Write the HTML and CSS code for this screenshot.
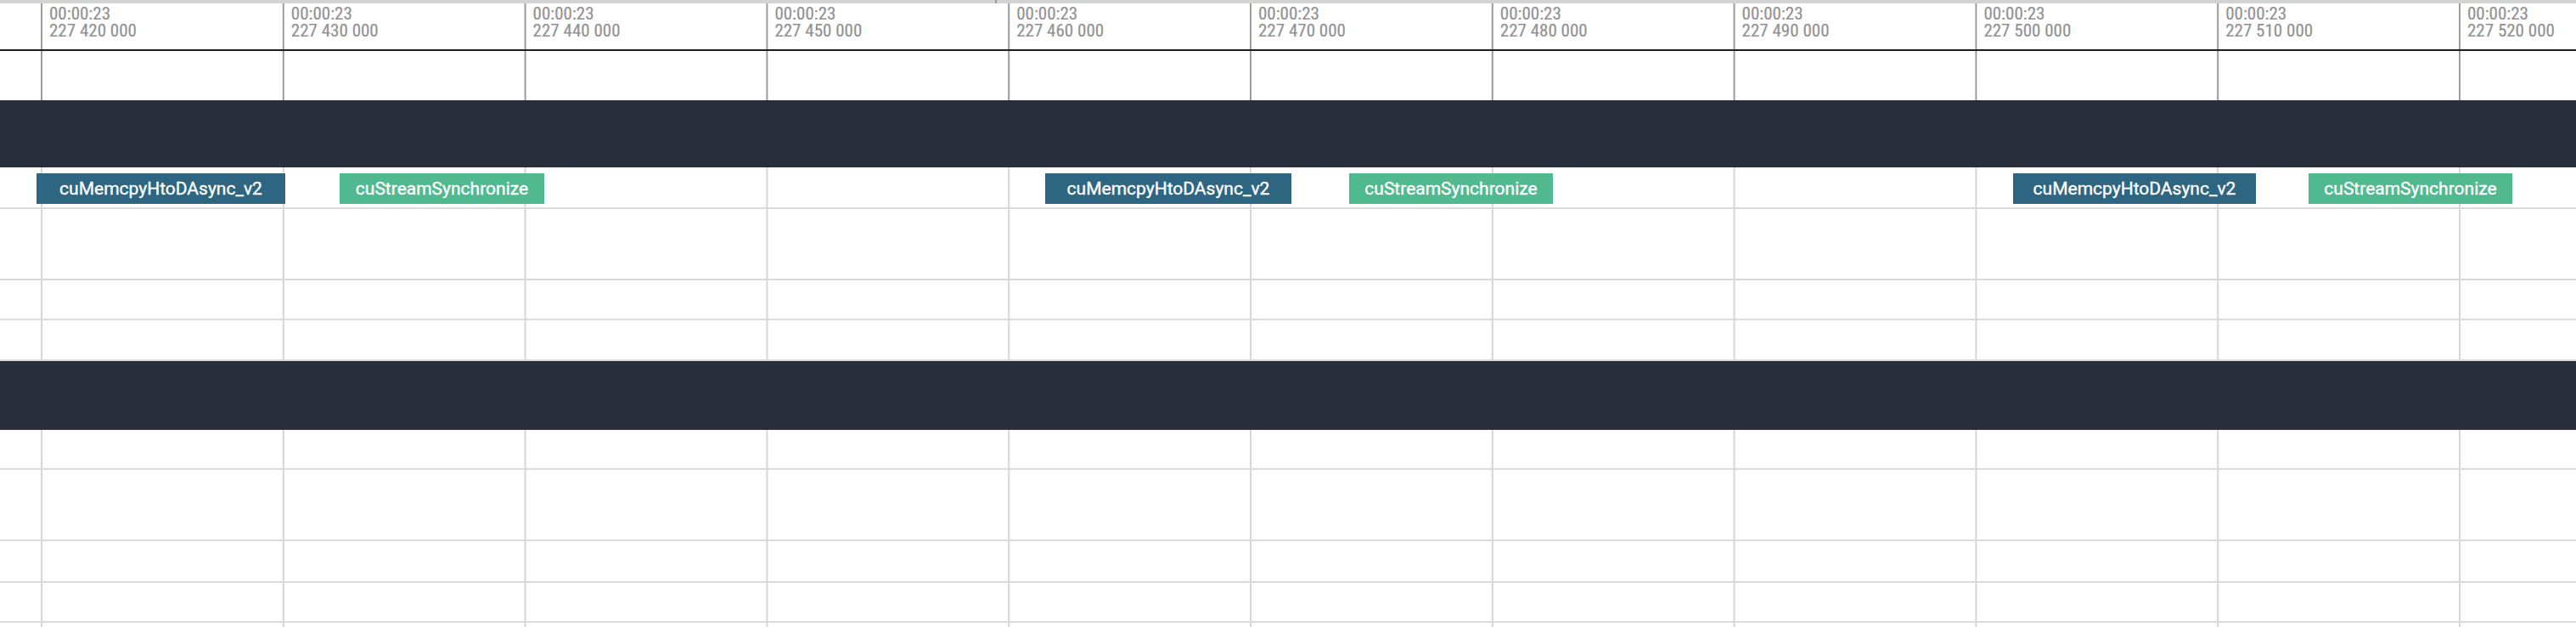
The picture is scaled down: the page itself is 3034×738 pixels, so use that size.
FILE: index.html
```html
<!DOCTYPE html>
<html lang="en">
<head>
<meta charset="utf-8">
<title>Timeline</title>
<link rel="stylesheet" href="styles.css">
</head>
<body>
<div class="timeline">
  <div class="topbar"><span class="playhead"></span></div>
  <div class="ruler">
    <div class="ticks">
      <div class="tick"><span>00:00:23</span><span>227 420 000</span></div>
      <div class="tick"><span>00:00:23</span><span>227 430 000</span></div>
      <div class="tick"><span>00:00:23</span><span>227 440 000</span></div>
      <div class="tick"><span>00:00:23</span><span>227 450 000</span></div>
      <div class="tick"><span>00:00:23</span><span>227 460 000</span></div>
      <div class="tick"><span>00:00:23</span><span>227 470 000</span></div>
      <div class="tick"><span>00:00:23</span><span>227 480 000</span></div>
      <div class="tick"><span>00:00:23</span><span>227 490 000</span></div>
      <div class="tick"><span>00:00:23</span><span>227 500 000</span></div>
      <div class="tick"><span>00:00:23</span><span>227 510 000</span></div>
      <div class="tick"><span>00:00:23</span><span>227 520 000</span></div>
    </div>
    <div class="ruler-rule"></div>
    <div class="ruler-space"></div>
  </div>
  <div class="tracks">
    <div class="band band-a"></div>
    <div class="track calls">
      <div class="call memcpy" style="left:43px;width:293px">cuMemcpyHtoDAsync_v2</div>
      <div class="call sync" style="left:400px;width:241px">cuStreamSynchronize</div>
      <div class="call memcpy" style="left:1231px;width:290px">cuMemcpyHtoDAsync_v2</div>
      <div class="call sync" style="left:1589px;width:240px">cuStreamSynchronize</div>
      <div class="call memcpy" style="left:2371px;width:286px">cuMemcpyHtoDAsync_v2</div>
      <div class="call sync" style="left:2719px;width:240px">cuStreamSynchronize</div>
    </div>
    <div class="track tall"></div>
    <div class="track short"></div>
    <div class="track mid"></div>
    <div class="band band-b"></div>
    <div class="track short"></div>
    <div class="track tall"></div>
    <div class="track calls-h"></div>
    <div class="track short"></div>
  </div>
</div>
</body>
</html>
```
FILE: styles.css
```css
html, body {
  margin: 0;
  padding: 0;
  background: #ffffff;
  overflow: hidden;
}

.timeline {
  width: 3034px;
  height: 738px;
  overflow: hidden;
  display: flex;
  flex-direction: column;
  font-family: Roboto, "Noto Sans", sans-serif;
  background: #ffffff;
}

.topbar {
  height: 4px;
  flex: none;
  background: #d2d4d2;
  position: relative;
}

.playhead {
  position: absolute;
  left: 1172px;
  top: 0;
  width: 2px;
  height: 4px;
  background: #9a9a9a;
}

.ruler {
  flex: none;
  display: flex;
  flex-direction: column;
  background-image: linear-gradient(to right, #9c9c9c 0, #9c9c9c 2px, transparent 2px);
  background-size: 284.8px 100%;
  background-position: 48px 0;
  background-repeat: repeat-x;
}

.ticks {
  height: 54px;
  display: flex;
  padding-left: 48px;
}

.tick {
  flex: none;
  width: 284.8px;
  box-sizing: border-box;
  padding: 2px 0 0 10px;
  display: flex;
  flex-direction: column;
  font-family: "Roboto Condensed", Roboto, sans-serif;
  font-stretch: condensed;
  font-size: 21px;
  line-height: 20px;
  color: #929292;
  -webkit-text-stroke: 0.2px #929292;
  white-space: nowrap;
}

.ruler-rule {
  height: 2px;
  background: #1e1e1e;
}

.ruler-space {
  height: 58px;
}

.tracks {
  flex: 1;
  display: flex;
  flex-direction: column;
  background-image: linear-gradient(to right, #d6d6d6 0, #d6d6d6 2px, transparent 2px);
  background-size: 284.8px 100%;
  background-position: 48px 0;
  background-repeat: repeat-x;
}

.band {
  flex: none;
  background: #282e3a;
}

.band-a { height: 79px; }
.band-b { height: 81px; }

.track {
  flex: none;
  position: relative;
  border-bottom: 2px solid #dadada;
}

.calls { height: 47px; }
.tall { height: 82px; }
.short { height: 45px; }
.mid { height: 46px; }
.calls-h { height: 47px; }

.call {
  position: absolute;
  top: 7px;
  height: 36px;
  display: flex;
  align-items: center;
  justify-content: center;
  color: #ffffff;
  font-size: 21px;
  -webkit-text-stroke: 0.35px #ffffff;
  white-space: nowrap;
  overflow: hidden;
}

.memcpy { background: #2e6580; }
.sync { background: #50b990; }
```
